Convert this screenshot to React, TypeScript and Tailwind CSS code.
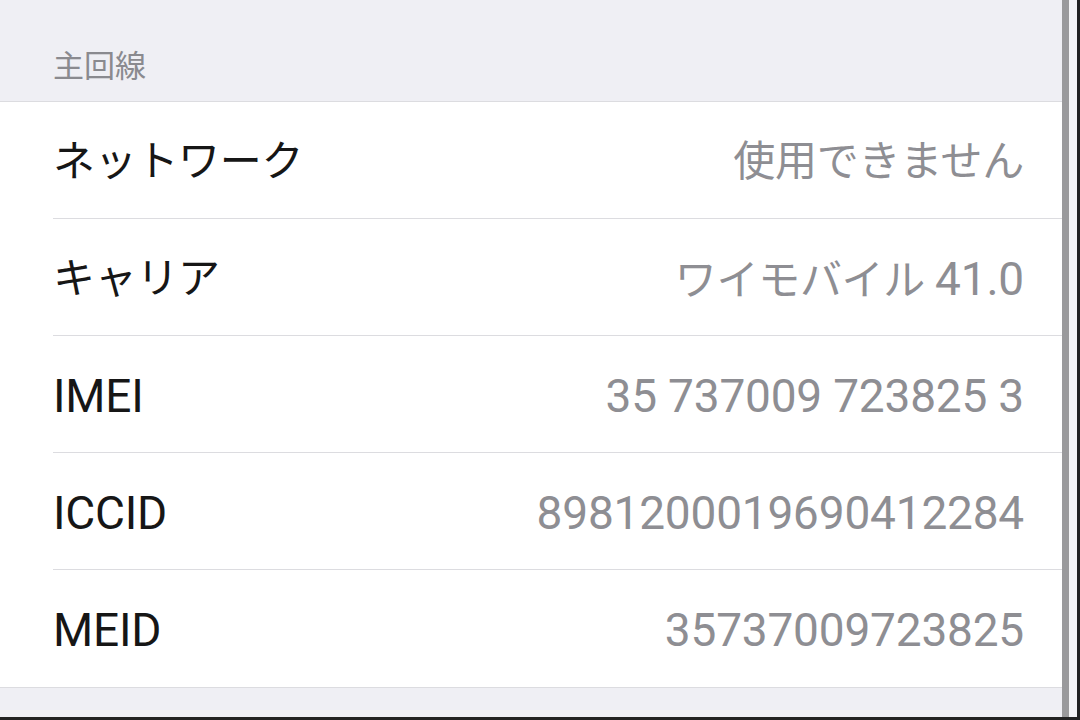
import React from 'react';

type Part = { text: string; ja?: boolean };

const rows: { label: Part[]; value: Part[] }[] = [
  { label: [{ text: 'ネットワーク', ja: true }], value: [{ text: '使用できません', ja: true }] },
  { label: [{ text: 'キャリア', ja: true }], value: [{ text: 'ワイモバイル ', ja: true }, { text: '41.0' }] },
  { label: [{ text: 'IMEI' }], value: [{ text: '35 737009 723825 3' }] },
  { label: [{ text: 'ICCID' }], value: [{ text: '8981200019690412284' }] },
  { label: [{ text: 'MEID' }], value: [{ text: '35737009723825' }] },
];

const Text: React.FC<{ parts: Part[] }> = ({ parts }) => (
  <>
    {parts.map((p, i) =>
      p.ja ? (
        <span key={i} className="text-[42px] tracking-[-0.3px]">{p.text}</span>
      ) : (
        <span key={i} className="text-[46px] tracking-[-0.2px] tabular-nums">{p.text}</span>
      )
    )}
  </>
);

const App: React.FC = () => {
  return (
    <div
      className="w-[1080px] h-[720px] flex flex-col overflow-hidden bg-[#efeff4]"
      style={{ fontFamily: 'Roboto, "Noto Sans CJK JP", sans-serif' }}
    >
      <div className="flex flex-1 min-h-0">
        <div className="w-[1062px] flex flex-col">
          <div className="h-[102px] border-b border-[#dcdce0] flex items-end pl-[53px] pb-[22px]">
            <span className="text-[31px] leading-none text-[#8a8a8f]" style={{ fontFamily: '"Noto Sans CJK JP", sans-serif' }}>
              主回線
            </span>
          </div>
          <div className="bg-white border-b border-[#dcdce0]">
            {rows.map((row, i) => (
              <div key={i} className="pl-[53px]">
                <div
                  className={`h-[117px] pt-[3px] flex items-center justify-between pr-[38px] leading-none ${
                    i < rows.length - 1 ? 'border-b border-[#dcdce0]' : ''
                  }`}
                >
                  <span className="text-[#161616] whitespace-pre">
                    <Text parts={row.label} />
                  </span>
                  <span className="text-[#8e8e93] whitespace-pre">
                    <Text parts={row.value} />
                  </span>
                </div>
              </div>
            ))}
          </div>
          <div className="flex-1" />
        </div>
        <div className="w-[7px] bg-[#9a9a9c]" />
        <div className="w-[8px] bg-[#f4f4f6]" />
        <div className="w-[3px] bg-[#222]" />
      </div>
      <div className="h-[3px] bg-[#222]" />
    </div>
  );
};

export default App;
